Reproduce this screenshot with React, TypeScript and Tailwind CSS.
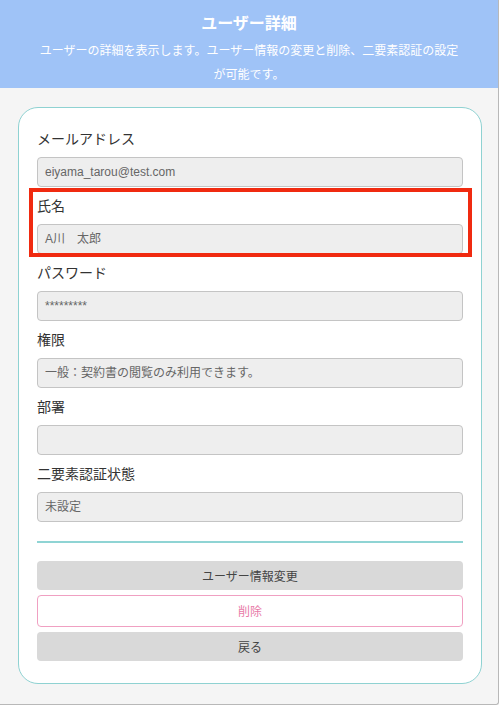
import React from 'react'

const fields = [
  { label: 'メールアドレス', value: 'eiyama_tarou@test.com' },
  { label: '氏名', value: 'A川　太郎', marked: true },
  { label: 'パスワード', value: '*********' },
  { label: '権限', value: '一般：契約書の閲覧のみ利用できます。' },
  { label: '部署', value: '' },
  { label: '二要素認証状態', value: '未設定' },
]

const font = { fontFamily: '"Noto Sans CJK JP", "Noto Sans", sans-serif' }

function Field({ label, value, marked }: { label: string; value: string; marked?: boolean }) {
  return (
    <div className="relative pb-[8px]">
      {marked && (
        <div className="absolute -left-[8px] -right-[9px] -top-[7px] bottom-[5px] border-[4px] border-[#f02a10] pointer-events-none" />
      )}
      <div className="text-[14px] leading-[20px] text-[#333]">{label}</div>
      <div
        className="mt-[9px] h-[30px] rounded-[4px] border border-[#c4c4c4] bg-[#eeeeee] px-[7px] text-[12px] leading-[28px] text-[#666]"
        style={{ fontFamily: '"Liberation Sans", "Noto Sans CJK JP", sans-serif' }}
      >
        {value}
      </div>
    </div>
  )
}

export default function App() {
  return (
    <div className="w-[499px] h-[705px] bg-[#f5f5f5] border-r border-b border-[#b8b8b8] rounded-br-[3px] overflow-hidden" style={font}>
      <div className="bg-[#9fc3f7] h-[88px] px-[38px] pt-[10px] text-center text-white">
        <h1 className="text-[16px] leading-[24px] font-bold">ユーザー詳細</h1>
        <p className="mt-[4px] text-[12px] leading-[24px]">
          ユーザーの詳細を表示します。ユーザー情報の変更と削除、二要素認証の設定が可能です。
        </p>
      </div>

      <div className="ml-[18px] mt-[19px] w-[464px] rounded-[20px] border border-[#8fd2d2] bg-white px-[18px] pt-[20px] pb-[22px]">
        {fields.map((f) => (
          <Field key={f.label} {...f} />
        ))}

        <div className="mt-[11px] border-t-2 border-[#8fd4d4]" />

        <div className="mt-[18px] flex flex-col gap-[5px] text-[12px]">
          <button className="h-[29px] rounded-[4px] bg-[#d9d9d9] text-[#444]">ユーザー情報変更</button>
          <button className="h-[32px] rounded-[4px] border border-[#f0a0c2] bg-white text-[#e87aa8]">削除</button>
          <button className="h-[29px] rounded-[4px] bg-[#d9d9d9] text-[#444]">戻る</button>
        </div>
      </div>
    </div>
  )
}
